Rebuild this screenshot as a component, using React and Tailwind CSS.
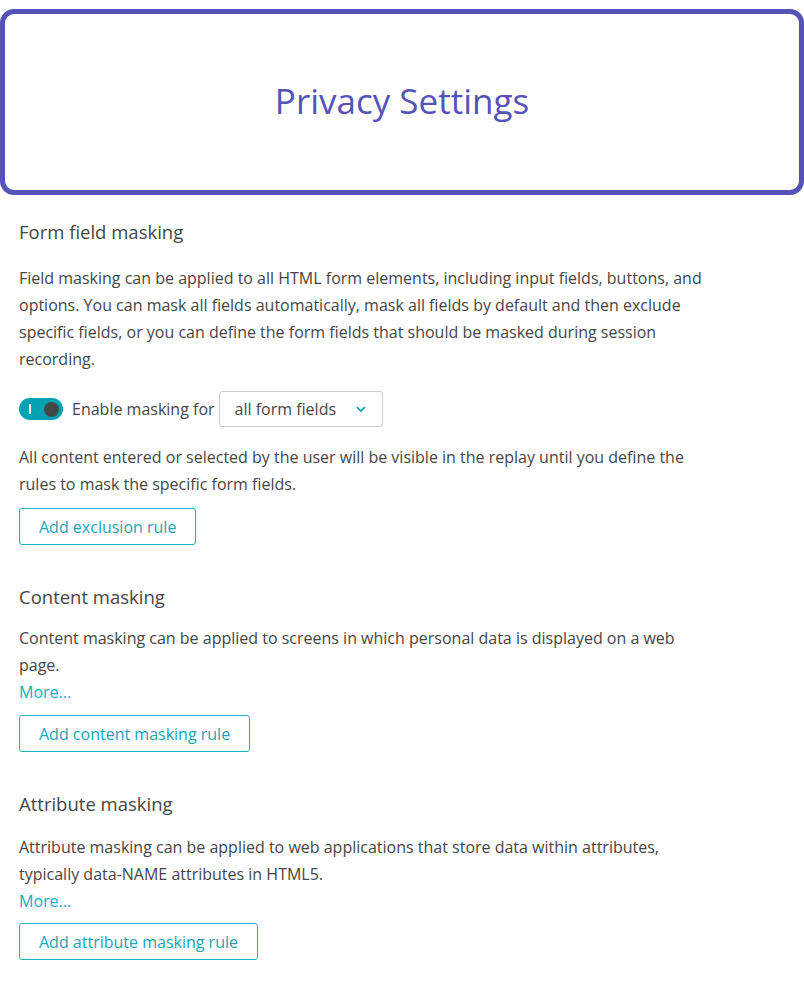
import React from "react";

function OutlineButton({ children }) {
  return (
    <button className="h-[37px] px-[19px] border border-[#1cb1c1] rounded-[3px] text-[#1ca4b5] text-[16px] leading-none bg-white">
      {children}
    </button>
  );
}

export default function App() {
  return (
    <div className="bg-white min-h-[989px] w-[804px] text-[#454646]" style={{ fontFamily: "'Open Sans', sans-serif" }}>
      <div className="pt-[9px]">
        <div className="h-[186px] border-[5px] border-[#5353b8] rounded-[14px] flex items-center justify-center pb-[3px]">
          <h1 className="text-[35px] text-[#5353b8] leading-none">Privacy Settings</h1>
        </div>
      </div>

      <div className="pl-[19px] w-[714px]">
        <section className="pt-[25px]">
          <h2 className="text-[18.5px] leading-[24px]">Form field masking</h2>
          <p className="mt-[21px] text-[16px] leading-[27px]">
            Field masking can be applied to all HTML form elements, including input fields, buttons, and options. You can mask all fields automatically, mask all fields by default and then exclude specific fields, or you can define the form fields that should be masked during session recording.
          </p>
          <div className="mt-[18px] flex items-center h-[36px]">
            <div className="relative w-[44px] h-[22px] rounded-full bg-[#00a1b2]">
              <span className="absolute left-[10px] top-[6px] w-[1.5px] h-[10px] bg-white"></span>
              <span className="absolute right-[4px] top-[3.5px] w-[15px] h-[15px] rounded-full bg-[#454646]"></span>
            </div>
            <span className="ml-[9px] text-[16px]">Enable masking for</span>
            <div className="ml-[4px] h-[36px] w-[164px] border border-[#cccccc] rounded-[3px] flex items-center pl-[15px] pr-[15px] justify-between">
              <span className="text-[16px]">all form fields</span>
              <svg width="12" height="8" viewBox="0 0 12 8" fill="none">
                <path d="M2 2l4 4 4-4" stroke="#00a1b2" strokeWidth="1.6" />
              </svg>
            </div>
          </div>
          <p className="mt-[17px] text-[16px] leading-[27px]">
            All content entered or selected by the user will be visible in the replay until you define the rules to mask the specific form fields.
          </p>
          <div className="mt-[10px]">
            <OutlineButton>Add exclusion rule</OutlineButton>
          </div>
        </section>

        <section className="pt-[40px]">
          <h2 className="text-[18.5px] leading-[24px]">Content masking</h2>
          <p className="mt-[16px] text-[16px] leading-[27px]">
            Content masking can be applied to screens in which personal data is displayed on a web page.
          </p>
          <a className="block text-[16px] leading-[27px] text-[#00b4c8]">More...</a>
          <div className="mt-[9px]">
            <OutlineButton>Add content masking rule</OutlineButton>
          </div>
        </section>

        <section className="pt-[40px]">
          <h2 className="text-[18.5px] leading-[24px]">Attribute masking</h2>
          <p className="mt-[18px] text-[16px] leading-[27px]">
            Attribute masking can be applied to web applications that store data within attributes, typically data-NAME attributes in HTML5.
          </p>
          <a className="block text-[16px] leading-[27px] text-[#00b4c8]">More...</a>
          <div className="mt-[8px]">
            <OutlineButton>Add attribute masking rule</OutlineButton>
          </div>
        </section>
      </div>
    </div>
  );
}
